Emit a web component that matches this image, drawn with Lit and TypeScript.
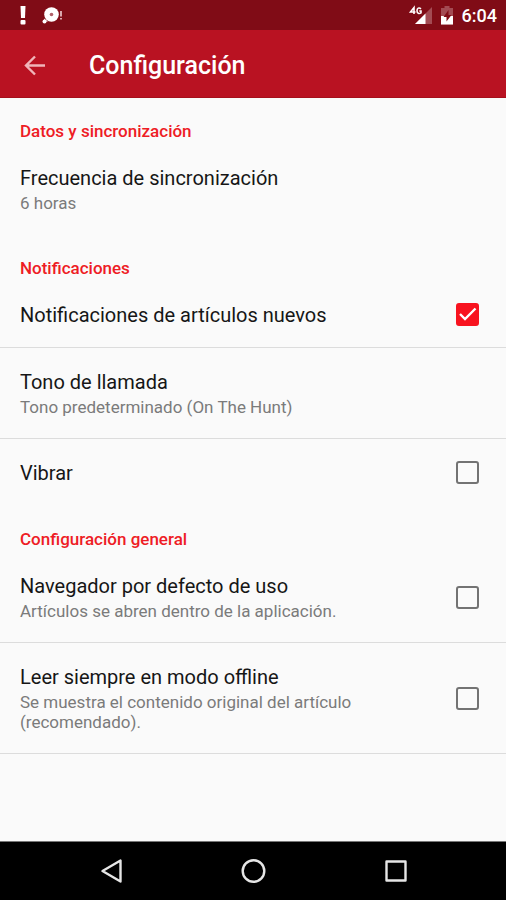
import { LitElement, html, css, svg, nothing } from "lit";
import { customElement, property, state } from "lit/decorators.js";

interface Preference {
  id: string;
  title: string;
  summary?: string;
  checked?: boolean;
  divider: boolean;
}

interface Section {
  title: string;
  items: Preference[];
}

const SECTIONS: Section[] = [
  {
    title: "Datos y sincronización",
    items: [
      { id: "sync", title: "Frecuencia de sincronización", summary: "6 horas", divider: false },
    ],
  },
  {
    title: "Notificaciones",
    items: [
      { id: "news", title: "Notificaciones de artículos nuevos", checked: true, divider: true },
      { id: "tone", title: "Tono de llamada", summary: "Tono predeterminado (On The Hunt)", divider: true },
      { id: "vibrate", title: "Vibrar", checked: false, divider: false },
    ],
  },
  {
    title: "Configuración general",
    items: [
      {
        id: "browser",
        title: "Navegador por defecto de uso",
        summary: "Artículos se abren dentro de la aplicación.",
        checked: false,
        divider: true,
      },
      {
        id: "offline",
        title: "Leer siempre en modo offline",
        summary: "Se muestra el contenido original del artículo (recomendado).",
        checked: false,
        divider: true,
      },
    ],
  },
];

@customElement("status-bar")
export class StatusBar extends LitElement {
  static styles = css`
    :host {
      display: flex;
      justify-content: space-between;
      align-items: center;
      box-sizing: border-box;
      height: 30px;
      padding: 2px 9px 0 16px;
      background: #800c16;
      color: #fff;
      font: 500 18px/28px Roboto, sans-serif;
    }
    .group {
      display: flex;
      align-items: center;
      gap: 8px;
    }
    svg {
      display: block;
    }
  `;

  render() {
    return html`
      <div class="group">
        <svg width="14" height="22" viewBox="0 0 14 22" fill="#fff" aria-hidden="true">
          <path d="M4.500 1h5l-.5 12H5z" />
          <rect x="4.500" y="15" width="5" height="4.600" rx="1" />
        </svg>
        <svg width="26" height="22" viewBox="0 0 26 22" aria-hidden="true">
          <circle cx="13.500" cy="9.500" r="7.300" fill="#fff" />
          <circle cx="13.500" cy="9.500" r="1.800" fill="#b06068" />
          <path d="M6 13.500l4 3H6.500z" fill="#fff" />
          <circle cx="6.500" cy="16.500" r="2" fill="#fff" />
          <path d="M23 6v5.500M23 13v1.600" stroke="#e3b9bd" stroke-width="1.800" />
        </svg>
      </div>
      <div class="group">
        <svg width="24" height="22" viewBox="0 0 24 22" aria-hidden="true">
          <path d="M7 19L24 2v17z" fill="#a34b53" />
          <path d="M7 19L17.500 8.500V19z" fill="#fff" />
          <g fill="none" stroke="#fff" stroke-width="1.600">
            <path d="M6 9V2.500L2.500 7H7.500" />
            <path d="M13 3.800C11 2.200 9 3 9 5.800s2.200 3.200 4 2V6H11.300" />
          </g>
        </svg>
        <svg width="14" height="22" viewBox="0 0 14 22" aria-hidden="true">
          <path d="M4.500 1h5v2H13v16.500H1V3h3.500z" fill="#a34b53" />
          <path d="M1 11h12v8.500H1z" fill="#fff" />
          <path d="M8.500 5L3.500 12h3v4.500l5-6.500h-3z" fill="#800c16" />
        </svg>
        <span>6:04</span>
      </div>
    `;
  }
}

@customElement("preference-row")
export class PreferenceRow extends LitElement {
  @property({ attribute: false }) item!: Preference;
  @state() private on?: boolean;

  static styles = css`
    :host {
      display: block;
    }
    .row {
      display: flex;
      align-items: center;
      box-sizing: border-box;
      width: 100%;
      padding: 0 27px 0 20px;
      border: 0;
      border-bottom: 1px solid transparent;
      background: none;
      text-align: left;
      font-family: Roboto, sans-serif;
      cursor: pointer;
    }
    .divider {
      border-bottom-color: #dcdcdc;
    }
    .text {
      flex: 1;
      display: flex;
      flex-direction: column;
      padding: 22px 72px 20px 0;
    }
    .title {
      font-size: 20px;
      line-height: 24px;
      color: #161616;
    }
    .summary {
      padding: 3px 0 1px;
      font-size: 17px;
      line-height: 20px;
      color: #7b7b7b;
    }
    .box {
      appearance: none;
      display: grid;
      flex: none;
      box-sizing: border-box;
      width: 23px;
      height: 23px;
      margin: 0;
      border: 2px solid #737373;
      border-radius: 3px;
      background: transparent;
      cursor: pointer;
    }
    .box:checked {
      border-color: #f8131f;
      background: #f8131f;
    }
    .control {
      display: grid;
    }
    .control > * {
      grid-area: 1 / 1;
    }
    .tick {
      pointer-events: none;
    }
  `;

  private toggle(e: Event) {
    this.on = (e.target as HTMLInputElement).checked;
  }

  render() {
    const { id, title, summary, checked, divider } = this.item;
    const rowClass = divider ? "row divider" : "row";
    const text = html`
      <span class="text">
        <span class="title">${title}</span>
        ${summary ? html`<span class="summary">${summary}</span>` : nothing}
      </span>
    `;
    if (checked === undefined) {
      return html`<button class=${rowClass} type="button">${text}</button>`;
    }
    const on = this.on ?? checked;
    return html`
      <label class=${rowClass} for=${id}>
        ${text}
        <span class="control">
          <input class="box" id=${id} type="checkbox" .checked=${on} @change=${this.toggle} />
          ${on
            ? html`<svg class="tick" width="23" height="23" viewBox="0 0 23 23" aria-hidden="true">
                <path d="M4 11l5 5L19.500 5.500" fill="none" stroke="#fff" stroke-width="2.400" />
              </svg>`
            : nothing}
        </span>
      </label>
    `;
  }
}

@customElement("navigation-bar")
export class NavigationBar extends LitElement {
  static styles = css`
    :host {
      display: grid;
      grid-template-columns: repeat(3, 28%);
      justify-content: center;
      height: 58px;
      background: #000;
      border-top: 1px solid #777;
    }
    button {
      display: grid;
      place-items: center;
      padding: 0;
      border: 0;
      background: none;
      cursor: pointer;
    }
  `;

  private icon(label: string, shape: unknown) {
    return html`
      <button type="button" aria-label=${label}>
        <svg width="28" height="28" viewBox="0 0 28 28" fill="none" stroke="#e6e6e6" stroke-width="2.400" stroke-linejoin="round">
          ${shape}
        </svg>
      </button>
    `;
  }

  render() {
    return html`
      ${this.icon("Atrás", svg`<path d="M23.500 3.500v21L5.500 14z" />`)}
      ${this.icon("Inicio", svg`<circle cx="14.500" cy="14" r="10.800" />`)}
      ${this.icon("Recientes", svg`<rect x="5.500" y="4.500" width="19" height="19" />`)}
    `;
  }
}

@customElement("app-root")
export class AppRoot extends LitElement {
  static styles = css`
    :host {
      display: flex;
      flex-direction: column;
      min-height: 100vh;
      background: #fafafa;
      font-family: Roboto, sans-serif;
    }
    .appbar {
      display: flex;
      align-items: center;
      gap: 42px;
      height: 63px;
      padding: 4px 23px 0;
      background: #b91222;
      border-bottom: 1px solid #a5101c;
      color: #fff;
    }
    .back {
      padding: 0;
      border: 0;
      background: none;
      cursor: pointer;
    }
    .back svg {
      display: block;
    }
    h1 {
      margin: 0;
      font-size: 25px;
      line-height: 32px;
      font-weight: 500;
    }
    main {
      flex: 1;
    }
    h2 {
      margin: 0;
      padding: 23px 20px 3px;
      font-size: 17px;
      line-height: 20px;
      font-weight: 500;
      color: #ee1c25;
    }
  `;

  render() {
    return html`
      <status-bar></status-bar>
      <header class="appbar">
        <button class="back" type="button" aria-label="Volver">
          <svg width="24" height="24" viewBox="0 0 24 24" fill="none" stroke="#f0b4b9" stroke-width="2.400">
            <path d="M22 11.500H4M12 2.500l-9 9 9 9" />
          </svg>
        </button>
        <h1>Configuración</h1>
      </header>
      <main>
        ${SECTIONS.map(
          (section) => html`
            <section>
              <h2>${section.title}</h2>
              ${section.items.map((item) => html`<preference-row .item=${item}></preference-row>`)}
            </section>
          `,
        )}
      </main>
      <navigation-bar></navigation-bar>
    `;
  }
}
